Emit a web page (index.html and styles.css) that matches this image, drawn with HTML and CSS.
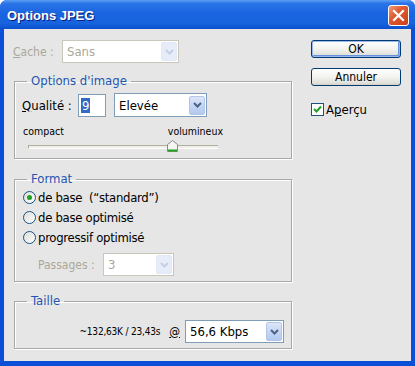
FILE: index.html
```html
<!DOCTYPE html>
<html lang="fr">
<head>
    <meta charset="UTF-8">
    <title>Options JPEG</title>
    <link rel="stylesheet" href="styles.css">
</head>
<body>

    <div class="window">
        <div class="titlebar">
            <span class="title">Options JPEG</span>
            <span class="close">
                <svg width="13" height="13" viewBox="0 0 13 13">
                    <path d="M2 2 L11 11 M11 2 L2 11" stroke="#fff" stroke-width="2.2" stroke-linecap="square"/>
                </svg>
            </span>
        </div>

        <div class="client">
            <div class="main">
                <div class="cache-row">
                    <span class="label disabled"><u>C</u>ache :</span>
                    <div class="combo combo-cache disabled">
                        <span class="value">Sans</span>
                        <span class="arrow">
                            <svg width="9" height="6" viewBox="0 0 9 6"><path d="M1 1 L4.5 4.5 L8 1" fill="none" stroke="#c5cfe4" stroke-width="2"/></svg>
                        </span>
                    </div>
                </div>

                <fieldset class="group group-image">
                    <legend>Options d'image</legend>
                    <div class="quality-row">
                        <span class="label"><u>Q</u>ualité :</span>
                        <div class="field"><span class="selected">9</span></div>
                        <div class="combo combo-quality">
                            <span class="value">Elevée</span>
                            <span class="arrow">
                                <svg width="9" height="6" viewBox="0 0 9 6"><path d="M1 1 L4.5 4.5 L8 1" fill="none" stroke="#4d6185" stroke-width="2"/></svg>
                            </span>
                        </div>
                    </div>
                    <div class="scale">
                        <span>compact</span>
                        <span>volumineux</span>
                    </div>
                    <div class="track">
                        <svg class="thumb" width="11" height="12" viewBox="0 0 11 12">
                            <path d="M0.5 4.5 L5.5 0.5 L10.5 4.5 L10.5 11.5 L0.5 11.5 Z" fill="#f4f4f0" stroke="#8a8a80"/>
                            <path d="M1 10.5 H10" stroke="#21a121" stroke-width="2"/>
                        </svg>
                    </div>
                </fieldset>

                <fieldset class="group group-format">
                    <legend>Format</legend>
                    <div class="radio-row"><span class="radio checked"></span>de base&nbsp;&nbsp;(“standard”)</div>
                    <div class="radio-row"><span class="radio"></span>de base optimisé</div>
                    <div class="radio-row"><span class="radio"></span>progressif optimisé</div>
                    <div class="passes-row">
                        <span class="label disabled">Passages :</span>
                        <div class="combo combo-passes disabled">
                            <span class="value">3</span>
                            <span class="arrow">
                                <svg width="9" height="6" viewBox="0 0 9 6"><path d="M1 1 L4.5 4.5 L8 1" fill="none" stroke="#c5cfe4" stroke-width="2"/></svg>
                            </span>
                        </div>
                    </div>
                </fieldset>

                <fieldset class="group group-size">
                    <legend>Taille</legend>
                    <div class="size-row">
                        <span class="estimate">~132,63K / 23,43s</span>
                        <span class="at"><u>@</u></span>
                        <div class="combo combo-speed">
                            <span class="value">56,6 Kbps</span>
                            <span class="arrow">
                                <svg width="9" height="6" viewBox="0 0 9 6"><path d="M1 1 L4.5 4.5 L8 1" fill="none" stroke="#4d6185" stroke-width="2"/></svg>
                            </span>
                        </div>
                    </div>
                </fieldset>
            </div>

            <div class="side">
                <button class="btn btn-default">OK</button>
                <button class="btn">Annuler</button>
                <div class="check-row">
                    <span class="checkbox">
                        <svg width="11" height="11" viewBox="0 0 11 11"><path d="M2 5 L4.5 7.5 L9 2.5" fill="none" stroke="#21a121" stroke-width="2"/></svg>
                    </span>
                    <span>A<u>p</u>erçu</span>
                </div>
            </div>
        </div>
    </div>

</body>
</html>
```

FILE: styles.css
```css
body {
    margin: 0;
    padding: 0;
    background: #fff;
    font-family: Tahoma, "DejaVu Sans Condensed", "DejaVu Sans", sans-serif;
    font-size: 12px;
    color: #000;
}

.window {
    width: 415px;
    height: 366px;
    background: #0b4fd8;
    border-radius: 7px 7px 0 0;
    display: flex;
    flex-direction: column;
    overflow: hidden;
}

.titlebar {
    height: 29px;
    flex: none;
    display: flex;
    align-items: center;
    justify-content: space-between;
    padding: 0 6px 0 7px;
    background: linear-gradient(to bottom, #5aa0f5 0%, #2a74e8 12%, #1a64e0 45%, #1763de 80%, #0d50cc 100%);
}

.title {
    font-family: "Liberation Sans", Arial, sans-serif;
    font-weight: bold;
    font-size: 13px;
    color: #fff;
    text-shadow: 1px 1px 0 #0a1e7a;
    margin-top: 1px;
}

.close {
    width: 19px;
    height: 19px;
    border: 1px solid #fff;
    border-radius: 3px;
    background: linear-gradient(to bottom right, #f09a7a 0%, #e05a2f 40%, #c9401a 100%);
    display: flex;
    align-items: center;
    justify-content: center;
    margin-top: 1px;
}

.client {
    flex: 1;
    margin: 0 4px 5px 4px;
    background: #e6e6e6;
    display: flex;
    padding: 11px 0 0 10px;
}

.main {
    width: 278px;
}

.side {
    width: 90px;
    margin-left: 19px;
    display: flex;
    flex-direction: column;
}

.disabled {
    color: #aca899;
}

/* combo boxes */

.combo {
    height: 23px;
    box-sizing: border-box;
    border: 1px solid #7f9db9;
    background: #fff;
    display: flex;
    align-items: center;
    justify-content: space-between;
    padding: 0 1px 0 0;
}

.combo .value {
    padding-left: 4px;
    font-size: 13px;
}

.combo .arrow {
    width: 16px;
    height: 19px;
    box-sizing: border-box;
    border: 1px solid #b3c6e8;
    border-radius: 2px;
    background: linear-gradient(to bottom, #dce6f8 0%, #c1d3f5 60%, #b4c8ef 100%);
    display: flex;
    align-items: center;
    justify-content: center;
}

.combo.disabled {
    border-color: #c9c7ba;
}

.combo.disabled .arrow {
    border-color: #e1e8f6;
    background: #e6edf9;
}

.cache-row {
    display: flex;
    align-items: center;
    height: 23px;
}

.cache-row .label {
    width: 49px;
    margin-left: -1px;
}

.combo-cache {
    width: 117px;
}

/* group boxes */

.group {
    margin: 0;
    padding: 0 7px 0 7px;
    border: 1px solid #a8a8a8;
    box-shadow: 1px 1px 0 #fff, inset 1px 1px 0 #fff;
    min-width: 0;
}

.group legend {
    margin-left: 5px;
    padding: 0 4px;
    color: #2355b0;
    font-size: 13px;
    line-height: 16px;
}

.group-image {
    margin-top: 10px;
    padding-top: 4px;
    padding-bottom: 9px;
}

.quality-row {
    display: flex;
    align-items: center;
    height: 24px;
}

.quality-row .label {
    width: 56px;
    font-size: 13px;
}

.field {
    width: 28px;
    height: 23px;
    box-sizing: border-box;
    border: 1px solid #7f9db9;
    background: #fff;
    padding: 3px 0 0 2px;
}

.selected {
    background: #316ac5;
    color: #fff;
    font-size: 13px;
    line-height: 15px;
    display: inline-block;
    padding: 0 1px;
}

.combo-quality {
    width: 93px;
    margin-left: 8px;
    height: 24px;
}

.scale {
    display: flex;
    justify-content: space-between;
    font-size: 10.5px;
    line-height: 13px;
    margin: 8px 61px 0 1px;
}

.track {
    position: relative;
    height: 4px;
    margin: 7px 66px 0 6px;
    box-sizing: border-box;
    border-top: 1px solid #b0ae9f;
    border-left: 1px solid #b0ae9f;
    background: #f0efe8;
    border-bottom: 1px solid #fff;
}

.thumb {
    position: absolute;
    left: 138px;
    top: -6px;
}

.group-format {
    margin-top: 12px;
    padding-bottom: 5px;
}

.radio-row {
    display: flex;
    align-items: center;
    height: 20px;
    font-size: 13px;
    letter-spacing: -0.3px;
}

.radio {
    width: 13px;
    height: 13px;
    box-sizing: border-box;
    border: 1px solid #1c5180;
    border-radius: 50%;
    background: linear-gradient(to bottom right, #dcdcd7, #fff);
    margin: 0 2px 0 1px;
    display: flex;
    align-items: center;
    justify-content: center;
}

.radio.checked::after {
    content: "";
    width: 5px;
    height: 5px;
    border-radius: 50%;
    background: #21a121;
}

.passes-row {
    display: flex;
    align-items: center;
    margin-top: 6px;
    padding-left: 16px;
}

.passes-row .label {
    width: 65px;
}

.combo-passes {
    width: 71px;
}

.group-size {
    margin-top: 11px;
    padding-top: 11px;
    padding-bottom: 5px;
}

.size-row {
    display: flex;
    align-items: center;
    justify-content: flex-end;
}

.estimate {
    font-size: 10px;
    letter-spacing: -0.2px;
}

.at {
    margin: 0 5px 0 9px;
}

.combo-speed {
    width: 99px;
}

/* buttons */

.btn {
    width: 90px;
    height: 18px;
    padding: 0;
    font-family: inherit;
    font-size: 12px;
    border: 1px solid #003c74;
    border-radius: 3px;
    background: linear-gradient(to bottom, #fff 0%, #f3f3ef 50%, #e2e2dc 85%, #d6d0c5 100%);
    margin-bottom: 10px;
}

.btn-default {
    box-shadow: inset 0 0 0 1px #9bb7ee, inset -1px -1px 0 1px #6990e0;
}

.check-row {
    display: flex;
    align-items: center;
    margin-top: 6px;
    font-size: 13px;
}

.checkbox {
    width: 13px;
    height: 13px;
    box-sizing: border-box;
    border: 1px solid #1c5180;
    background: #fff;
    display: flex;
    align-items: center;
    justify-content: center;
    margin-right: 2px;
}
```
